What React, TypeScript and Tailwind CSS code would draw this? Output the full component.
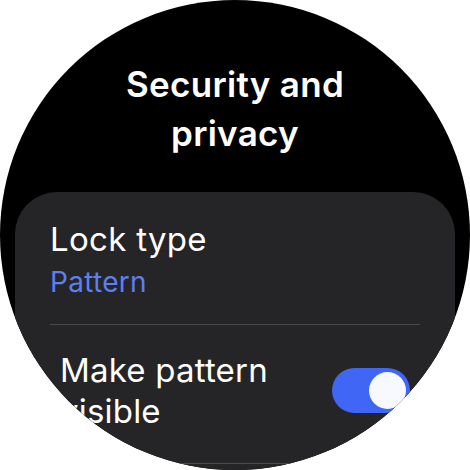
export default function App() {
  return (
    <div className="w-[470px] h-[470px] bg-white" style={{ fontFamily: 'Inter, "Noto Sans", sans-serif' }}>
      <div className="w-full h-full rounded-full bg-black overflow-hidden flex flex-col items-center">
        <h1 className="mt-[60px] text-center text-white text-[35px] leading-[49px] font-semibold tracking-[0.3px]">
          Security and
          <br />
          privacy
        </h1>
        <div className="mt-[34px] w-[440px] flex-1 rounded-t-[42px] bg-[#252527] px-[35px] pt-[27px]">
          <div className="flex flex-col">
            <span className="text-white text-[33px] leading-[40px] tracking-[0.3px]">Lock type</span>
            <span className="text-[#5d7ff0] text-[28px] leading-[36px] mt-[5px] tracking-[0.3px]">Pattern</span>
          </div>
          <div className="mt-[24px] h-px bg-[#4b4b4e]" />
          <div className="flex items-start justify-between pl-[10px] pr-[10px] pt-[25px]">
            <span className="text-white text-[33px] leading-[41px] w-[240px] tracking-[0.2px]">Make pattern visible</span>
            <div className="mt-[18px] w-[78px] h-[45px] rounded-full bg-[#4066f6] flex items-center justify-end pr-[4px]">
              <div className="w-[37px] h-[37px] rounded-full bg-[#f8f9ff]" />
            </div>
          </div>
          <div className="mt-[31px] h-px bg-[#4b4b4e]" />
        </div>
      </div>
    </div>
  );
}
